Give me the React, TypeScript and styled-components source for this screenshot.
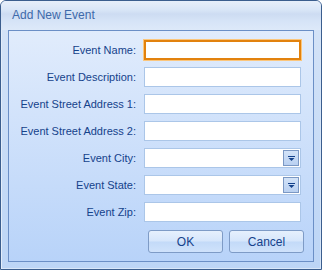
import {FC} from "react";
import styled, {createGlobalStyle} from "styled-components";

const fields = [
  {label: 'Event Name:', kind: 'focus'},
  {label: 'Event Description:', kind: 'text'},
  {label: 'Event Street Address 1:', kind: 'text'},
  {label: 'Event Street Address 2:', kind: 'text'},
  {label: 'Event City:', kind: 'combo'},
  {label: 'Event State:', kind: 'combo'},
  {label: 'Event Zip:', kind: 'text'},
]

const App: FC = () => {
  return <>
    <GlobalStyle/>
    <Window>
      <TitleBar>Add New Event</TitleBar>
      <Frame>
        <Panel>
          <Form>
            {fields.map((f) => (
              <Row key={f.label}>
                <Label>{f.label}</Label>
                {f.kind === 'combo'
                  ? <Combo>
                    <ComboButton>
                      <svg width="7" height="5" viewBox="0 0 7 5">
                        <rect x="0" y="0" width="7" height="1" fill="#15428b"/>
                        <polygon points="0.5,2 6.5,2 3.5,5" fill="#15428b"/>
                      </svg>
                    </ComboButton>
                  </Combo>
                  : <TextBox $focused={f.kind === 'focus'}/>}
              </Row>
            ))}
          </Form>
          <Buttons>
            <Button>OK</Button>
            <Button>Cancel</Button>
          </Buttons>
        </Panel>
      </Frame>
    </Window>
  </>
}

const GlobalStyle = createGlobalStyle`
  body {
    margin: 0;
    font-family: "Liberation Sans", Arial, sans-serif;
  }
`

const Window = styled.div`
  width: 322px;
  height: 270px;
  box-sizing: border-box;
  border: 1px solid #3b5e8e;
  border-radius: 6px 6px 0 0;
  background: linear-gradient(#d6e4f7, #bcd5f6);
  display: flex;
  flex-direction: column;
  overflow: hidden;
`

const TitleBar = styled.div`
  height: 29px;
  flex: none;
  box-sizing: border-box;
  padding: 7px 0 0 11px;
  font-size: 12px;
  color: #3e6aaa;
  background: linear-gradient(#e7effa 0%, #d9e6f7 30%, #cddcf2 45%, #d6e4f7 70%, #dde9f9 100%);
`

const Frame = styled.div`
  flex: 1;
  display: flex;
  padding: 0 7px 7px 7px;
  box-shadow: inset 1px 0 0 #e3edfa, inset -1px 0 0 #d4e4f8, inset 0 -1px 0 #d9e7f9;
`

const Panel = styled.div`
  flex: 1;
  border: 1px solid #6b8fc6;
  background: linear-gradient(#e1ecfc, #b8d3f9);
  display: flex;
  flex-direction: column;
  padding: 9px 12px 0 0;
`

const Form = styled.div`
  display: flex;
  flex-direction: column;
  gap: 7px;
`

const Row = styled.div`
  display: grid;
  grid-template-columns: 1fr 157px;
  column-gap: 8px;
  align-items: center;
  height: 20px;
`

const Label = styled.div`
  text-align: right;
  font-size: 11px;
  color: #15428b;
  white-space: nowrap;
`

const TextBox = styled.div<{ $focused?: boolean }>`
  height: 20px;
  box-sizing: border-box;
  background: #fff;
  border: ${p => p.$focused ? '2px solid #e2820e' : '1px solid #abc6e8'};
  box-shadow: ${p => p.$focused ? '0 0 0 1px #fbc67c' : 'none'};
`

const Combo = styled.div`
  height: 20px;
  box-sizing: border-box;
  background: #fff;
  border: 1px solid #abc6e8;
  display: flex;
  justify-content: flex-end;
  align-items: center;
  padding-right: 1px;
`

const ComboButton = styled.div`
  width: 16px;
  height: 16px;
  box-sizing: border-box;
  border: 1px solid #7b98c4;
  background: linear-gradient(#d3e3f8, #b9d0f1);
  display: flex;
  align-items: center;
  justify-content: center;
`

const Buttons = styled.div`
  display: flex;
  justify-content: flex-end;
  gap: 6px;
  margin-top: 8px;
  margin-right: -3px;
`

const Button = styled.button`
  width: 75px;
  height: 23px;
  box-sizing: border-box;
  border: 1px solid #7e9bc6;
  border-radius: 3px;
  background: linear-gradient(#e6f0fd 0%, #d6e6fb 48%, #c3daf8 52%, #cfe2fb 100%);
  font-family: "Liberation Sans", Arial, sans-serif;
  font-size: 12px;
  color: #15428b;
  padding: 0;
`

export default App;
